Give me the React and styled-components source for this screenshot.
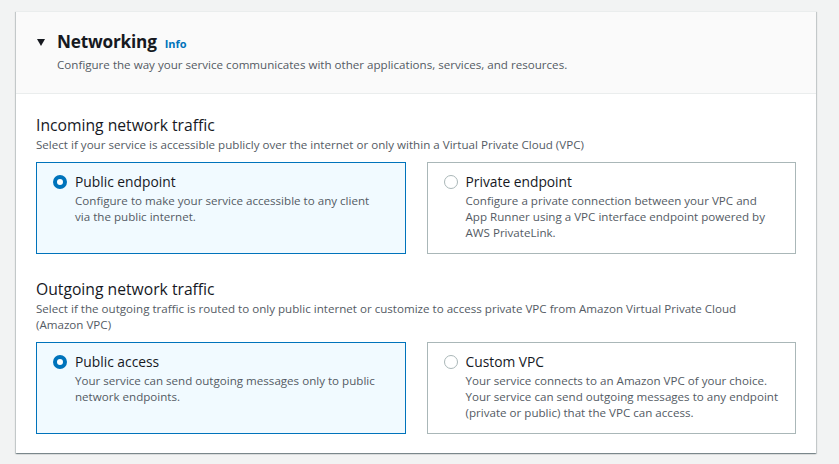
import React, { useState } from 'react';
import styled, { createGlobalStyle } from 'styled-components';

const GlobalStyle = createGlobalStyle`
  html, body { margin: 0; padding: 0; background: #f2f3f3; }
  body { font-family: "Open Sans", "Noto Sans", sans-serif; color: #16191f; }
`;

const Page = styled.div`
  padding: 11px 23px 11px 16px;
`;

const Container = styled.section`
  background: #fff;
  border-top: 1px solid #eaeded;
  box-shadow: 0 1px 1px 0 rgba(0, 28, 36, 0.3), 1px 1px 1px 0 rgba(0, 28, 36, 0.15),
    -1px 1px 1px 0 rgba(0, 28, 36, 0.15);
`;

const Header = styled.header`
  background: #fafafa;
  border-bottom: 1px solid #eaeded;
  padding: 18px 20px 20px 20px;
`;

const TitleRow = styled.div`
  display: flex;
  align-items: center;
  gap: 8px;
  height: 24px;
`;

const Caret = styled.span`
  width: 0;
  height: 0;
  border-left: 4.5px solid transparent;
  border-right: 4.5px solid transparent;
  border-top: 7px solid #16191f;
  margin: 1px 4px 0 1px;
`;

const Title = styled.h2`
  margin: 0;
  font-size: 17.2px;
  font-weight: 700;
  letter-spacing: -0.2px;
  line-height: 24px;
`;

const InfoLink = styled.a`
  font-size: 11px;
  font-weight: 700;
  color: #0073bb;
  text-decoration: none;
  margin-top: 3px;
`;

const HeaderDesc = styled.p`
  margin: 0 0 0 21px;
  font-size: 11.6px;
  line-height: 16px;
  color: #545b64;
  padding-top: 3px;
`;

const Body = styled.div`
  padding: 20px 20px 19px;
  display: flex;
  flex-direction: column;
  gap: 24px;
`;

const Group = styled.div``;

const GroupTitle = styled.h3`
  margin: 0;
  font-size: 15.7px;
  font-weight: 400;
  line-height: 22px;
`;

const GroupDesc = styled.p`
  margin: 1px 0 9px;
  font-size: 11.6px;
  line-height: 16px;
  color: #545b64;
`;

const Tiles = styled.div`
  display: grid;
  grid-template-columns: 1fr 1fr;
  gap: 21px;
`;

const Tile = styled.label`
  display: flex;
  gap: 8px;
  padding: 8px 15px 12px 16px;
  border: 1px solid ${p => (p.$selected ? '#0073bb' : '#aab7b8')};
  background: ${p => (p.$selected ? '#f1faff' : '#fff')};
  cursor: pointer;
`;

const Radio = styled.span`
  flex: none;
  box-sizing: border-box;
  width: 14px;
  height: 14px;
  margin-top: 4px;
  border-radius: 50%;
  background: #fff;
  border: ${p => (p.$checked ? '4px solid #0073bb' : '1px solid #aab7b8')};
`;

const TileText = styled.div`
  display: flex;
  flex-direction: column;
`;

const TileLabel = styled.span`
  font-size: 13.8px;
  line-height: 22px;
  color: #16191f;
`;

const TileDesc = styled.span`
  font-size: 11.6px;
  line-height: 16px;
  color: #545b64;
  padding-right: ${p => p.$inset || 0}px;
`;

const groups = [
  {
    key: 'in',
    title: 'Incoming network traffic',
    desc: 'Select if your service is accessible publicly over the internet or only within a Virtual Private Cloud (VPC)',
    options: [
      {
        id: 'public',
        label: 'Public endpoint',
        desc: 'Configure to make your service accessible to any client via the public internet.',
        inset: 8,
      },
      {
        id: 'private',
        label: 'Private endpoint',
        desc: 'Configure a private connection between your VPC and App Runner using a VPC interface endpoint powered by AWS PrivateLink.',
      },
    ],
  },
  {
    key: 'out',
    title: 'Outgoing network traffic',
    desc: 'Select if the outgoing traffic is routed to only public internet or customize to access private VPC from Amazon Virtual Private Cloud (Amazon\u00a0VPC)',
    options: [
      {
        id: 'public',
        label: 'Public access',
        desc: 'Your service can send outgoing messages only to public network endpoints.',
        inset: 8,
      },
      {
        id: 'custom',
        label: 'Custom VPC',
        desc: 'Your service connects to an Amazon VPC of your choice. Your service can send outgoing messages to any endpoint (private or public) that the VPC can access.',
      },
    ],
  },
];

export default function App() {
  const [value, setValue] = useState({ in: 'public', out: 'public' });

  return (
    <>
      <GlobalStyle />
      <Page>
        <Container>
          <Header>
            <TitleRow>
              <Caret />
              <Title>Networking</Title>
              <InfoLink href="#">Info</InfoLink>
            </TitleRow>
            <HeaderDesc>
              Configure the way your service communicates with other applications, services, and resources.
            </HeaderDesc>
          </Header>
          <Body>
            {groups.map(g => (
              <Group key={g.key}>
                <GroupTitle>{g.title}</GroupTitle>
                <GroupDesc>{g.desc}</GroupDesc>
                <Tiles>
                  {g.options.map(o => {
                    const checked = value[g.key] === o.id;
                    return (
                      <Tile key={o.id} $selected={checked} onClick={() => setValue({ ...value, [g.key]: o.id })}>
                        <Radio $checked={checked} />
                        <TileText>
                          <TileLabel>{o.label}</TileLabel>
                          <TileDesc $inset={o.inset}>{o.desc}</TileDesc>
                        </TileText>
                      </Tile>
                    );
                  })}
                </Tiles>
              </Group>
            ))}
          </Body>
        </Container>
      </Page>
    </>
  );
}
